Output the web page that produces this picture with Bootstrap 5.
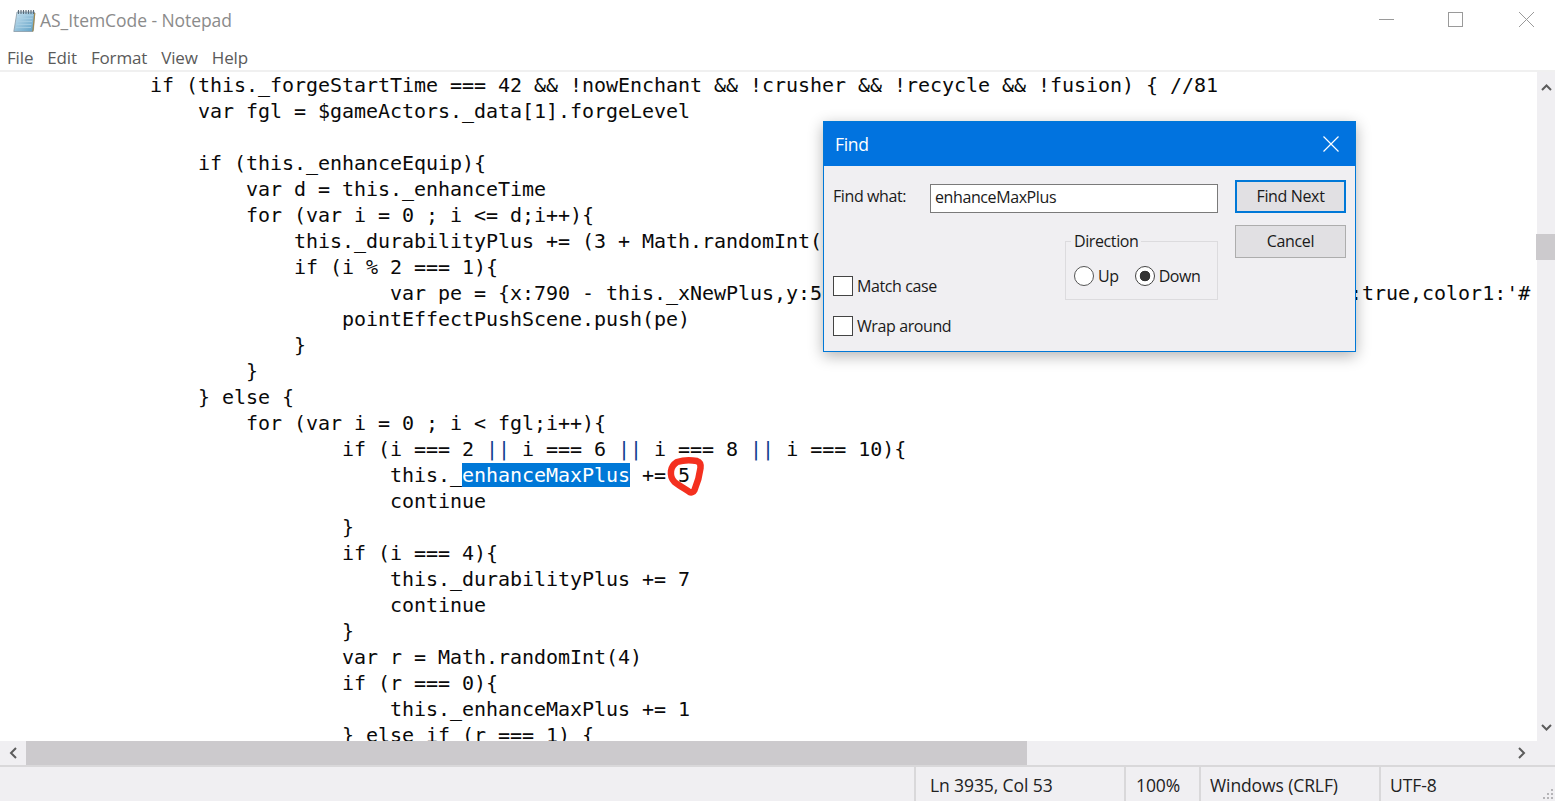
<!DOCTYPE html>
<html lang="en">
<head>
<meta charset="utf-8">
<title>AS_ItemCode - Notepad</title>
<link href="https://cdn.jsdelivr.net/npm/bootstrap@5.3.0/dist/css/bootstrap.min.css" rel="stylesheet">
<style>
html,body{height:100%;margin:0;overflow:hidden;background:#fff}
.np-ui{font-family:"Open Sans","Noto Sans",sans-serif;letter-spacing:-.4px}
.np-win{height:801px;width:1555px;position:relative}
.np-title{height:41px;color:#8b8b8b;font-size:17.5px;padding-left:13px;letter-spacing:-.06px}
.np-title>svg{margin-right:4px}
.np-ctl{margin-left:auto;display:flex;height:100%}
.np-ctl svg{display:block}
.np-menu{height:29px;color:#5a5a5a;font-size:17px;padding:4px 0 0 7px;gap:14px;letter-spacing:-.15px}
.np-sep{height:2px;background:#f0f0f0}
.np-mid{height:669px}
.np-code{flex:1 1 auto;overflow:hidden;font-family:"DejaVu Sans Mono","Liberation Mono",monospace;font-size:20px;letter-spacing:-.04px;line-height:26px;color:#0a0a0a;white-space:pre;padding-left:6px;margin:0;position:relative}
.np-sel{background:#0078d7;color:#fff}
.np-or{color:#12408f}
.np-vbar{width:18px;background:#f0eff2;position:relative;flex:none}
.np-vbar svg{position:absolute;left:4px}
.np-vthumb{position:absolute;top:162px;left:-1px;width:19px;height:26px;background:#cccacd}
.np-hbar{height:24px;background:#f0eff2;padding-left:26px;padding-right:18px;position:relative}
.np-hthumb{width:1001px;height:100%;background:#cccacd}
.np-hbar svg{position:absolute;top:6px}
.np-status{height:36px;background:#f0eff2;border-top:2px solid #d9d8da;font-size:17.5px;color:#222;position:relative;letter-spacing:-.1px}
.np-cell{height:100%;border-left:2px solid #d9d8da;padding:2px 0 0 13px;display:flex;align-items:center}
.np-c1{margin-left:914px;width:210px;padding-left:14px}
.np-c2{width:75px;padding-left:10px}
.np-c3{width:180px;padding-left:9px}
.np-c4{padding-left:9px}
.np-grip{position:absolute;right:1px;bottom:1px}
.np-scribble{position:absolute;left:665px;top:454px;pointer-events:none}
.np-dlg{position:absolute;left:823px;top:121px;width:533px;height:231px;background:#f0eff2;border:1px solid #0078d7;box-shadow:0 4px 14px rgba(0,0,0,.3);font-size:16px;color:#1a1a1a}
.np-dhead{height:44px;background:#0173df;color:#fff;font-size:17.5px;padding:0 16px 0 11px;letter-spacing:-.3px}
.np-dbody{padding:14px 9px 0 9px;gap:17px}
.np-left{width:385px}
.np-right{width:111px;gap:12px}
.np-label{width:97px;line-height:1;padding-bottom:2px}
.np-input{border:1px solid #7a7a7a;border-radius:0;height:29px;width:288px;padding:0 4px 4px;font:inherit;letter-spacing:inherit;color:#1a1a1a;background:#fff;margin-top:4px}
.np-input:focus{box-shadow:none;border-color:#7a7a7a;background:#fff}
.np-btn{border-radius:0;height:33px;width:111px;background:#e1e0e3;border:1px solid #adadad;color:#1a1a1a;font-size:16px;padding:0 0 2px;letter-spacing:-.35px}
.np-btn.np-def{border:2px solid #0078d7}
.np-lower{margin-top:28px;height:60px}
.np-checks{width:232px;padding-top:35px;gap:20px}
.np-chk{display:flex;align-items:center;margin:0;gap:4px;height:20px}
.np-chk .form-check-input,.np-rad .form-check-input{margin:0;float:none;flex:none;width:20px;height:20px;background-color:#fff;border:1px solid #333;box-shadow:none}
.np-chk .form-check-input{border-radius:0;border-color:#444}
.np-rad{display:flex;align-items:center;gap:4px;margin:0}
.np-rad .form-check-input:checked{background-image:radial-gradient(circle,#333 0 5px,#fff 5.6px);border-color:#444}
.np-rad .form-check-input{border-color:#555}
.np-group{position:relative;width:153px;height:59px;border:1px solid #dcdbde;padding:10px 0 0 8px;gap:16px;margin-top:0;align-items:center}
.np-legend{position:absolute;left:5px;top:-11px;background:#f0eff2;padding:0 3px;line-height:20px}
</style>
</head>
<body>
<div class="np-win d-flex flex-column">
  <div class="np-title np-ui d-flex align-items-center">
    <svg width="23" height="24" viewBox="0 0 23 24"><defs><linearGradient id="npg" x1="0" y1="0" x2="1" y2="1"><stop offset="0" stop-color="#cfe6f3"/><stop offset="1" stop-color="#5d9fc4"/></linearGradient></defs><path d="M4 3h17.5l-1 17.5-.8 2H.8z" fill="url(#npg)" stroke="#8a9aa6" stroke-width=".8"/><path d="M5 6.500h15M4.500 9.500h15M4 12.500h15M3.500 15.500h15M3 18.500h15" stroke="#a9cfe3" stroke-width=".8"/><path d="M5.500 1v4M8 1v4M10.500 1v4M13 1v4M15.500 1v4M18 1v4M20.500 1v4" stroke="#5a6b78" stroke-width="1.100"/><path d="M19.800 22.500 21.800 4" stroke="#a0894f" stroke-width="1.200" fill="none"/></svg>
    <span>AS_ItemCode - Notepad</span>
    <div class="np-ctl">
      <svg width="195" height="41" viewBox="1360 0 195 41" fill="none" stroke="#9a9a9a" stroke-width="1"><path d="M1379 19.500h15"/><rect x="1448.500" y="12.500" width="14" height="14"/><path d="M1519 12l15 15M1534 12l-15 15"/></svg>
    </div>
  </div>
  <div class="np-menu np-ui d-flex align-items-center"><span>File</span><span>Edit</span><span>Format</span><span>View</span><span>Help</span></div>
  <div class="np-sep"></div>
  <div class="np-mid d-flex">
<pre class="np-code">            if (this._forgeStartTime === 42 &amp;&amp; !nowEnchant &amp;&amp; !crusher &amp;&amp; !recycle &amp;&amp; !fusion) { //81
                var fgl = $gameActors._data[1].forgeLevel

                if (this._enhanceEquip){
                    var d = this._enhanceTime
                    for (var i = 0 ; i &lt;= d;i++){
                        this._durabilityPlus += (3 + Math.randomInt(5))
                        if (i % 2 === 1){
                                var pe = {x:790 - this._xNewPlus,y:500 - this._yNewPlus,img:'sparks',up:100,move:true,color1:'#
                            pointEffectPushScene.push(pe)
                        }
                    }
                } else {
                    for (var i = 0 ; i &lt; fgl;i++){
                            if (i === 2 <span class="np-or">||</span> i === 6 <span class="np-or">||</span> i === 8 <span class="np-or">||</span> i === 10){
                                this._<span class="np-sel">enhanceMaxPlus</span> += 5
                                continue
                            }
                            if (i === 4){
                                this._durabilityPlus += 7
                                continue
                            }
                            var r = Math.randomInt(4)
                            if (r === 0){
                                this._enhanceMaxPlus += 1
                            } else if (r === 1) {</pre>
    <div class="np-vbar">
      <svg width="11" height="7" viewBox="0 0 11 7" style="top:12px"><path d="M1 6l4.500-4.500L10 6" fill="none" stroke="#5c5c5c" stroke-width="2"/></svg>
      <div class="np-vthumb"></div>
      <svg width="11" height="7" viewBox="0 0 11 7" style="top:652px"><path d="M1 1l4.500 4.500L10 1" fill="none" stroke="#5c5c5c" stroke-width="2"/></svg>
    </div>
  </div>
  <div class="np-hbar d-flex">
    <svg width="8" height="12" viewBox="0 0 8 12" style="left:9px"><path d="M7 1L2 6l5 5" fill="none" stroke="#5c5c5c" stroke-width="2"/></svg>
    <div class="np-hthumb"></div>
    <svg width="8" height="12" viewBox="0 0 8 12" style="left:1518px"><path d="M1 1l5 5-5 5" fill="none" stroke="#5c5c5c" stroke-width="2"/></svg>
  </div>
  <div class="np-status np-ui d-flex">
    <div class="np-cell np-c1">Ln 3935, Col 53</div>
    <div class="np-cell np-c2">100%</div>
    <div class="np-cell np-c3">Windows (CRLF)</div>
    <div class="np-cell np-c4">UTF-8</div>
    <svg class="np-grip" width="12" height="12" viewBox="0 0 12 12" fill="#b5b4b7"><rect x="9" y="1" width="2" height="2"/><rect x="5" y="5" width="2" height="2"/><rect x="9" y="5" width="2" height="2"/><rect x="1" y="9" width="2" height="2"/><rect x="5" y="9" width="2" height="2"/><rect x="9" y="9" width="2" height="2"/></svg>
  </div>

  <svg class="np-scribble" width="44" height="46" viewBox="665 454 44 46"><path d="M677 462c6-2 15-2 20-1 3 1 4 3 3.500 7-1 8-3 15-6 22-1 2-3 3-5 2-4-3-10-6-15-10-3-3-4-7-3.500-11 .5-4 3-7 6-9z" fill="none" stroke="#f4301f" stroke-width="6.500" stroke-linecap="round" stroke-linejoin="round"/></svg>

  <div class="np-dlg np-ui">
    <div class="np-dhead d-flex align-items-center justify-content-between">
      <span>Find</span>
      <svg width="16" height="16" viewBox="0 0 16 16" fill="none" stroke="#fff" stroke-width="1.200"><path d="M.5.500l15 15M15.500.500l-15 15"/></svg>
    </div>
    <div class="np-dbody d-flex">
      <div class="np-left">
        <div class="d-flex align-items-center">
          <label class="np-label">Find what:</label>
          <input class="form-control np-input" type="text" value="enhanceMaxPlus">
        </div>
        <div class="np-lower d-flex">
          <div class="np-checks d-flex flex-column">
            <label class="np-chk"><input class="form-check-input" type="checkbox">Match case</label>
            <label class="np-chk"><input class="form-check-input" type="checkbox">Wrap around</label>
          </div>
          <div class="np-group d-flex">
            <span class="np-legend">Direction</span>
            <label class="np-rad"><input class="form-check-input" type="radio" name="npdir">Up</label>
            <label class="np-rad"><input class="form-check-input" type="radio" name="npdir" checked>Down</label>
          </div>
        </div>
      </div>
      <div class="np-right d-flex flex-column">
        <button class="btn np-btn np-def">Find Next</button>
        <button class="btn np-btn">Cancel</button>
      </div>
    </div>
  </div>
</div>
</body>
</html>
